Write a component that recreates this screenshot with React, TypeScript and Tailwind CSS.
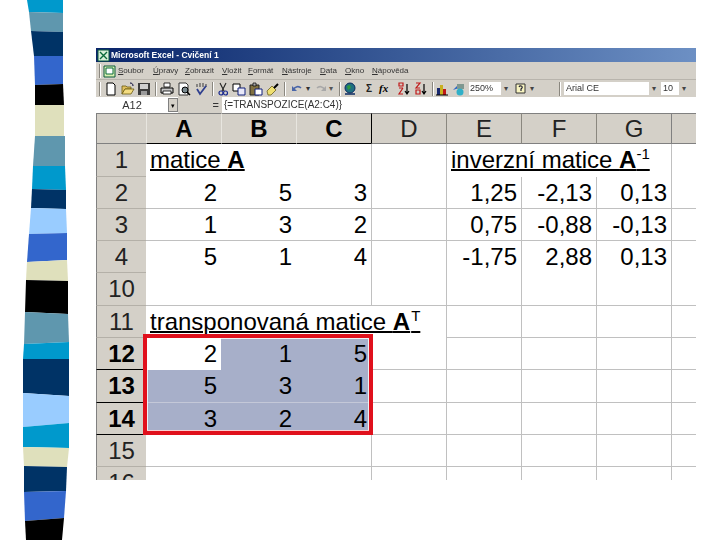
const stripes: [string, string][] = [
  ["#0099cc", "27,0 63,0 63,13 29,12"],
  ["#5f97ae", "29,12 63,13 63,32 31,31"],
  ["#003366", "31,31 63,32 63,56 34,56"],
  ["#3366cc", "34,56 63,56 63,84 35,85"],
  ["#000000", "35,85 63,84 64,105 35,105"],
  ["#dfe0bc", "35,105 64,105 64,136 35,136"],
  ["#5f97ae", "35,136 65,136 65,166 33,166"],
  ["#0099cc", "33,166 65,166 66,190 32,189"],
  ["#003366", "32,189 66,190 66,209 31,208"],
  ["#99ccff", "31,208 66,209 67,233 29,234"],
  ["#3366cc", "29,234 67,233 67,260 27,262"],
  ["#dfe0bc", "27,262 67,260 68,281 26,280"],
  ["#000000", "26,280 68,281 68,314 25,312"],
  ["#5f97ae", "25,312 68,314 69,342 24,344"],
  ["#0099cc", "24,344 69,342 69,359 23,359"],
  ["#003366", "23,359 69,359 69,396 23,393"],
  ["#99ccff", "23,393 69,396 69,423 23,427"],
  ["#0099cc", "23,427 69,423 69,448 23,447"],
  ["#dfe0bc", "23,447 69,448 67,467 24,466"],
  ["#003366", "24,466 67,467 66,491 24,492"],
  ["#3366cc", "24,492 66,491 64,518 25,521"],
  ["#000000", "25,521 64,518 62,540 26,540"],
];

function Sidebar() {
  return (
    <svg width="96" height="540" viewBox="0 0 96 540" className="shrink-0">
      {stripes.map(([fill, points], i) => (
        <polygon key={i} fill={fill} points={points} />
      ))}
    </svg>
  );
}

function Ico({ children, className }: { children: React.ReactNode; className: string }) {
  return (
    <svg width="14" height="14" viewBox="0 0 14 14" className={"shrink-0 " + className}>
      {children}
    </svg>
  );
}

function Sep({ className }: { className: string }) {
  return <div className={"h-[14px] w-[2px] shrink-0 border-l border-r border-l-[#8a877f] border-r-white " + className} />;
}

function Menu({ first, rest, className }: { first: string; rest: string; className: string }) {
  return (
    <span className={className}>
      <span className="underline">{first}</span>
      {rest}
    </span>
  );
}

function Toolbar() {
  return (
    <div className="flex h-[17px] items-center bg-[#d4d0c8]">
      <Sep className="ml-[3px]" />
      {/* new */}
      <Ico className="ml-[3px]">
        <path d="M3 1h6l2 2v10H3z" fill="#fff" stroke="#000" />
      </Ico>
      {/* open */}
      <Ico className="ml-[3px]">
        <path d="M1 4h4l1 1h4v2H4L1 12z" fill="#e0c060" stroke="#6b5a10" strokeWidth="0.8" />
        <path d="M4 7h9l-3 5H1z" fill="#f4dc80" stroke="#6b5a10" strokeWidth="0.8" />
        <path d="M9 1c2 0 3 1 3 3" fill="none" stroke="#003" />
      </Ico>
      {/* save */}
      <Ico className="ml-[2px]">
        <path d="M1 1h12v12H1z" fill="#3c3c3c" />
        <path d="M3 2h8v5H3z" fill="#cfcfcf" />
        <path d="M4 9h6v4H4z" fill="#9a9a9a" />
      </Ico>
      <Sep className="ml-[4px]" />
      {/* print */}
      <Ico className="ml-[3px]">
        <path d="M4 1h6v4H4z" fill="#fff" stroke="#000" strokeWidth="0.8" />
        <path d="M1 6h12v5H1z" fill="#c8c8c8" stroke="#000" />
        <path d="M3 9h8v3H3z" fill="#fff" stroke="#000" strokeWidth="0.8" />
      </Ico>
      {/* preview */}
      <Ico className="ml-[3px]">
        <path d="M2 1h7l2 2v10H2z" fill="#fff" stroke="#333" />
        <circle cx="8" cy="8" r="3" fill="#7a8a90" stroke="#000" />
        <path d="M10 10l3 3" stroke="#000" strokeWidth="1.5" />
      </Ico>
      {/* spelling */}
      <Ico className="ml-[3px]">
        <path d="M3 2v3M6 1v4M9 1v4M12 2v3" stroke="#555" strokeWidth="1.2" fill="none" />
        <path d="M3 7l3 5 6-8" stroke="#2f3f8f" strokeWidth="1.8" fill="none" />
      </Ico>
      <Sep className="ml-[4px]" />
      {/* cut */}
      <Ico className="ml-[2px]">
        <path d="M4 1l4 8M10 1L6 9" stroke="#222" strokeWidth="1.1" />
        <circle cx="5" cy="11" r="2" fill="none" stroke="#1a2a90" strokeWidth="1.2" />
        <circle cx="9.500" cy="11" r="2" fill="none" stroke="#1a2a90" strokeWidth="1.2" />
      </Ico>
      {/* copy */}
      <Ico className="ml-[2px]">
        <path d="M1 2h7v7H1z" fill="#fff" stroke="#000" />
        <path d="M6 6h7v7H6z" fill="#e8e8f8" stroke="#10207a" />
      </Ico>
      {/* paste */}
      <Ico className="ml-[3px]">
        <path d="M1 3h9v10H1z" fill="#807040" stroke="#222" />
        <path d="M4 1h3v3H4z" fill="#aaa" stroke="#000" strokeWidth="0.7" />
        <path d="M6 7h7v6H6z" fill="#fff" stroke="#10207a" />
      </Ico>
      {/* format painter */}
      <Ico className="ml-[3px]">
        <path d="M1 9l5-5 4 4-5 5H2z" fill="#f0e070" stroke="#6b6020" strokeWidth="0.8" />
        <path d="M8 6l4-4" stroke="#000" strokeWidth="2" />
      </Ico>
      <Sep className="ml-[4px]" />
      {/* undo */}
      <Ico className="ml-[4px]">
        <path d="M3 8c2-4 6-4 8-2" fill="none" stroke="#4a66a8" strokeWidth="1.6" />
        <path d="M2 4v5h5z" fill="#4a66a8" />
      </Ico>
      <span className="ml-[2px] text-[8px] leading-none text-[#333]">▾</span>
      {/* redo */}
      <Ico className="ml-[4px]">
        <path d="M11 8C9 4 5 4 3 6" fill="none" stroke="#a8a8a8" strokeWidth="1.6" />
        <path d="M12 4v5H7z" fill="#a8a8a8" />
      </Ico>
      <span className="ml-[1px] text-[8px] leading-none text-[#555]">▾</span>
      <Sep className="ml-[6px]" />
      {/* web globe */}
      <Ico className="ml-[2px]">
        <circle cx="7" cy="6" r="5" fill="#1f6f80" stroke="#0b2a60" />
        <path d="M4 4l3-1 1 3-3 2z" fill="#2d9a3e" />
        <path d="M2 12h10" stroke="#0b2a60" strokeWidth="1.5" />
      </Ico>
      {/* autosum */}
      <span className="ml-[9px] w-[10px] font-['Liberation_Sans',sans-serif] text-[10px] leading-none font-bold text-[#222]">Σ</span>
      <span className="ml-[3px] w-[12px] font-['Liberation_Serif',serif] text-[11px] leading-none font-bold text-black italic">fx</span>
      {/* sort asc */}
      <Ico className="ml-[6px]">
        <path d="M2 1h4v3H2zM2 6h4M6 6L2 12h4" fill="none" stroke="#c01818" strokeWidth="1.2" />
        <path d="M10 2v9M8 9l2 3 2-3" fill="none" stroke="#000" strokeWidth="1.2" />
      </Ico>
      {/* sort desc */}
      <Ico className="ml-[3px]">
        <path d="M2 1h4L2 6h4M2 8h4v4H2z" fill="none" stroke="#c01818" strokeWidth="1.2" />
        <path d="M10 2v9M8 9l2 3 2-3" fill="none" stroke="#000" strokeWidth="1.2" />
      </Ico>
      <Sep className="ml-[4px]" />
      {/* chart */}
      <Ico className="ml-[1px]">
        <path d="M2 6h3v7H2z" fill="#1a2a70" />
        <path d="M5 3h3v10H5z" fill="#c8b020" />
        <path d="M8 7h3v6H8z" fill="#c01818" />
        <path d="M1 13h12" stroke="#000" />
      </Ico>
      {/* map */}
      <Ico className="ml-[3px]">
        <path d="M1 8l5-5 1 3z" fill="#2a66c8" />
        <path d="M5 2h7v5H5z" fill="#809890" />
        <circle cx="8" cy="10" r="3.500" fill="#30b0c8" />
      </Ico>
      <div className="ml-[3px] flex h-[13px] w-[32px] items-center bg-white pl-[1px] font-['Liberation_Sans',sans-serif] text-[9px] leading-none text-[#333] blur-[0.4px]">
        250%
      </div>
      <span className="ml-[3px] text-[8px] leading-none text-[#444]">▾</span>
      {/* help */}
      <Ico className="ml-[6px]">
        <path d="M2 2h9v9H2z" fill="#f8f4c0" stroke="#333" />
        <path d="M5 5c1-2 4-1 3 1l-1 1v2" fill="none" stroke="#223" strokeWidth="1.2" />
      </Ico>
      <span className="ml-[2px] text-[8px] leading-none text-[#444]">▾</span>
      <Sep className="ml-[25px]" />
      <div className="ml-[3px] flex h-[13px] w-[85px] items-center bg-white pl-[2px] font-['Liberation_Sans',sans-serif] text-[9px] leading-none text-[#333] blur-[0.4px]">
        Arial CE
      </div>
      <span className="ml-[3px] w-[9px] text-[8px] leading-none text-[#444]">▾</span>
      <div className="flex h-[13px] w-[18px] items-center bg-white pl-[2px] font-['Liberation_Sans',sans-serif] text-[9px] leading-none text-[#333] blur-[0.4px]">
        10
      </div>
      <span className="ml-[3px] text-[8px] leading-none text-[#444]">▾</span>
    </div>
  );
}

const colHead = "flex items-center justify-center border-t border-b border-l font-['Liberation_Sans',sans-serif] text-[24px] leading-none";
const rowHead = "flex items-center justify-center border-l border-l-[#808080] border-b bg-[#d4d0c8] text-[24px] leading-none";
const num = "flex items-center justify-end pr-[4px] text-[24px] leading-none text-black";
const sel = "bg-[#a7afc9]";

function RowHead({ label, on }: { label: string; on?: boolean }) {
  return <div className={rowHead + (on ? " font-bold border-b-black" : " border-b-[#b4b0a8] text-[#222]")}>{label}</div>;
}

function Sheet() {
  const gridRows = [
    { label: "2", vals: ["2", "5", "3"], inv: ["1,25", "-2,13", "0,13"], line: true },
    { label: "3", vals: ["1", "3", "2"], inv: ["0,75", "-0,88", "-0,13"], line: true },
    { label: "4", vals: ["5", "1", "4"], inv: ["-1,75", "2,88", "0,13"], line: false },
  ];
  const chosen = [
    { label: "12", vals: ["2", "1", "5"], firstWhite: true },
    { label: "13", vals: ["5", "3", "1"], firstWhite: false },
    { label: "14", vals: ["3", "2", "4"], firstWhite: false },
  ];

  return (
    <div className="relative">
      <div className="grid grid-cols-[50px_75px_75px_75px_75px_75px_75px_75px_25px] grid-rows-[31px_33px_32px_32px_32px_33px_32px_32px_33px_32px_32px_32px] bg-white font-['Liberation_Sans',sans-serif]">
        {/* column headers */}
        <div className="border-t border-b border-l border-[#808080] bg-[#d4d0c8]" />
        {["A", "B", "C"].map((c) => (
          <div key={c} className={colHead + " border-t-[#808080] border-b-black border-l-[#e8e6e0] bg-[#d4d0c8] font-bold"}>
            {c}
          </div>
        ))}
        {["D", "E", "F", "G"].map((c, i) => (
          <div
            key={c}
            className={colHead + " border-t-[#808080] border-b-[#808080] bg-[#d4d0c8] text-[#222] " + (i === 0 ? "border-l-black" : "border-l-[#8a877f]")}
          >
            {c}
          </div>
        ))}
        <div className="border-t border-b border-l border-[#808080] bg-[#d4d0c8]" />

        {/* row 1 */}
        <RowHead label="1" />
        <div className="col-span-3 flex items-start pt-[2px] pl-[4px] text-[24px] leading-[27px] whitespace-nowrap text-black">
          <span className="underline decoration-2 underline-offset-[1px]">
            matice <b>A</b>
          </span>
        </div>
        <div className="border-l border-[#c0c0c0]" />
        <div className="col-span-3 flex items-start border-l border-[#c0c0c0] pt-[2px] pl-[4px] text-[24px] leading-[27px] whitespace-nowrap text-black">
          <span className="underline decoration-2 underline-offset-[1px]">
            inverzní matice <b>A</b>
            <span className="align-[9px] text-[15px] leading-[0]">-1</span>
          </span>
        </div>
        <div className="border-l border-[#c0c0c0]" />

        {/* rows 2-4 */}
        {gridRows.map((r) => {
          const line = r.line ? " border-b border-[#c0c0c0]" : " border-[#c0c0c0]";
          return [
            <RowHead key={r.label} label={r.label} />,
            ...r.vals.map((v, i) => (
              <div key={r.label + "v" + i} className={num + line}>
                {v}
              </div>
            )),
            <div key={r.label + "d"} className={"border-l" + line} />,
            ...r.inv.map((v, i) => (
              <div key={r.label + "i" + i} className={num + " border-l" + line}>
                {v}
              </div>
            )),
            <div key={r.label + "h"} className={"border-l" + line} />,
          ];
        })}

        {/* row 10 */}
        <RowHead label="10" />
        <div className="col-span-3 border-b border-[#c0c0c0]" />
        <div className="border-b border-l border-[#c0c0c0]" />
        <div className="border-b border-l border-[#c0c0c0]" />
        <div className="border-b border-l border-[#c0c0c0]" />
        <div className="border-b border-l border-[#c0c0c0]" />
        <div className="border-b border-l border-[#c0c0c0]" />

        {/* row 11 */}
        <RowHead label="11" />
        <div className="col-span-4 flex items-start pt-[2px] pl-[4px] text-[24px] leading-[27px] whitespace-nowrap text-black">
          <span className="underline decoration-2 underline-offset-[1px]">
            transponovaná matice <b>A</b>
            <span className="ml-[1px] align-[9px] text-[15px] leading-[0]">T</span>
          </span>
        </div>
        <div className="border-b border-l border-[#c0c0c0]" />
        <div className="border-b border-l border-[#c0c0c0]" />
        <div className="border-b border-l border-[#c0c0c0]" />
        <div className="border-b border-l border-[#c0c0c0]" />

        {/* rows 12-14, the selected block */}
        {chosen.map((r) => [
          <RowHead key={r.label} label={r.label} on />,
          ...r.vals.map((v, i) => (
            <div
              key={r.label + "v" + i}
              className={num + (r.firstWhite && i === 0 ? " bg-white" : " " + sel) + (r.label === "13" ? " border-b border-[#c4c8d8]" : "")}
            >
              {v}
            </div>
          )),
          ...["d", "e", "f", "g", "h"].map((k) => <div key={r.label + k} className="border-b border-l border-[#c0c0c0]" />),
        ])}

        {/* rows 15-16 */}
        <RowHead label="15" />
        <div className="col-span-3 border-b border-[#c0c0c0]" />
        {["d", "e", "f", "g", "h"].map((k) => (
          <div key={"15" + k} className="border-b border-l border-[#c0c0c0]" />
        ))}
        <RowHead label="16" />
        <div className="col-span-3" />
        {["d", "e", "f", "g", "h"].map((k) => (
          <div key={"16" + k} className="border-l border-[#c0c0c0]" />
        ))}
      </div>
      {/* red frame drawn over the selection */}
      <div className="absolute top-[221px] left-[47px] h-[101px] w-[230px] border-4 border-b-[5px] border-[#e0101c] outline-1 -outline-offset-5 outline-white/80" />
    </div>
  );
}

export default function App() {
  return (
    <div className="flex h-[540px] w-[720px] overflow-hidden bg-white font-['Liberation_Sans',sans-serif]">
      <Sidebar />
      <div className="mt-[48px] h-[432px] w-[600px] overflow-hidden">
        {/* title bar */}
        <div className="flex h-[14px] items-center bg-gradient-to-r from-[#0a246a] to-[#6d90c4]">
          <svg width="13" height="13" viewBox="0 0 13 13" className="ml-[1px] shrink-0">
            <path d="M1 1h11v11H1z" fill="#d8f0d8" stroke="#0a5a3a" />
            <path d="M3 3l7 7M10 3l-7 7" stroke="#0a6a3a" strokeWidth="1.4" />
          </svg>
          <span className="ml-[1px] text-[8.5px] leading-none font-bold text-white blur-[0.3px]">Microsoft Excel - Cvičení 1</span>
        </div>
        {/* menu bar */}
        <div className="flex h-[18px] items-center border-b border-[#b8b4ac] bg-[#d4d0c8] pt-[1px] text-[8px] leading-none text-[#333] blur-[0.4px]">
          <Sep className="ml-[3px]" />
          <svg width="14" height="13" viewBox="0 0 14 13" className="ml-[2px] shrink-0">
            <path d="M1 1h11v11H1z" fill="#d8f0b0" stroke="#0a5a3a" />
            <path d="M3 3h7v6H3z" fill="#fff" stroke="#0a6a3a" />
          </svg>
          <Menu first="S" rest="oubor" className="ml-[1px] w-[35px]" />
          <Menu first="Ú" rest="pravy" className="w-[32px]" />
          <Menu first="Z" rest="obrazit" className="w-[37px]" />
          <Menu first="V" rest="ložit" className="w-[26px]" />
          <Menu first="F" rest="ormát" className="w-[34px]" />
          <Menu first="N" rest="ástroje" className="w-[38px]" />
          <Menu first="D" rest="ata" className="w-[25px]" />
          <Menu first="O" rest="kno" className="w-[27px]" />
          <Menu first="N" rest="ápověda" className="whitespace-nowrap" />
        </div>
        <Toolbar />
        {/* formula bar */}
        <div className="flex h-[16px] items-center bg-white text-[10px] leading-none text-[#333] blur-[0.3px]">
          <div className="w-[72px] text-center text-[11px]">A12</div>
          <div className="flex h-[14px] w-[10px] items-center justify-center border border-[#808080] bg-[#d4d0c8] text-[7px] text-black">▾</div>
          <div className="flex h-[16px] w-[44px] items-center justify-end bg-[#d4d0c8] pr-[3px] text-[11px]">=</div>
          <div className="pl-[2px] whitespace-nowrap">{"{=TRANSPOZICE(A2:C4)}"}</div>
        </div>
        <Sheet />
      </div>
    </div>
  );
}
